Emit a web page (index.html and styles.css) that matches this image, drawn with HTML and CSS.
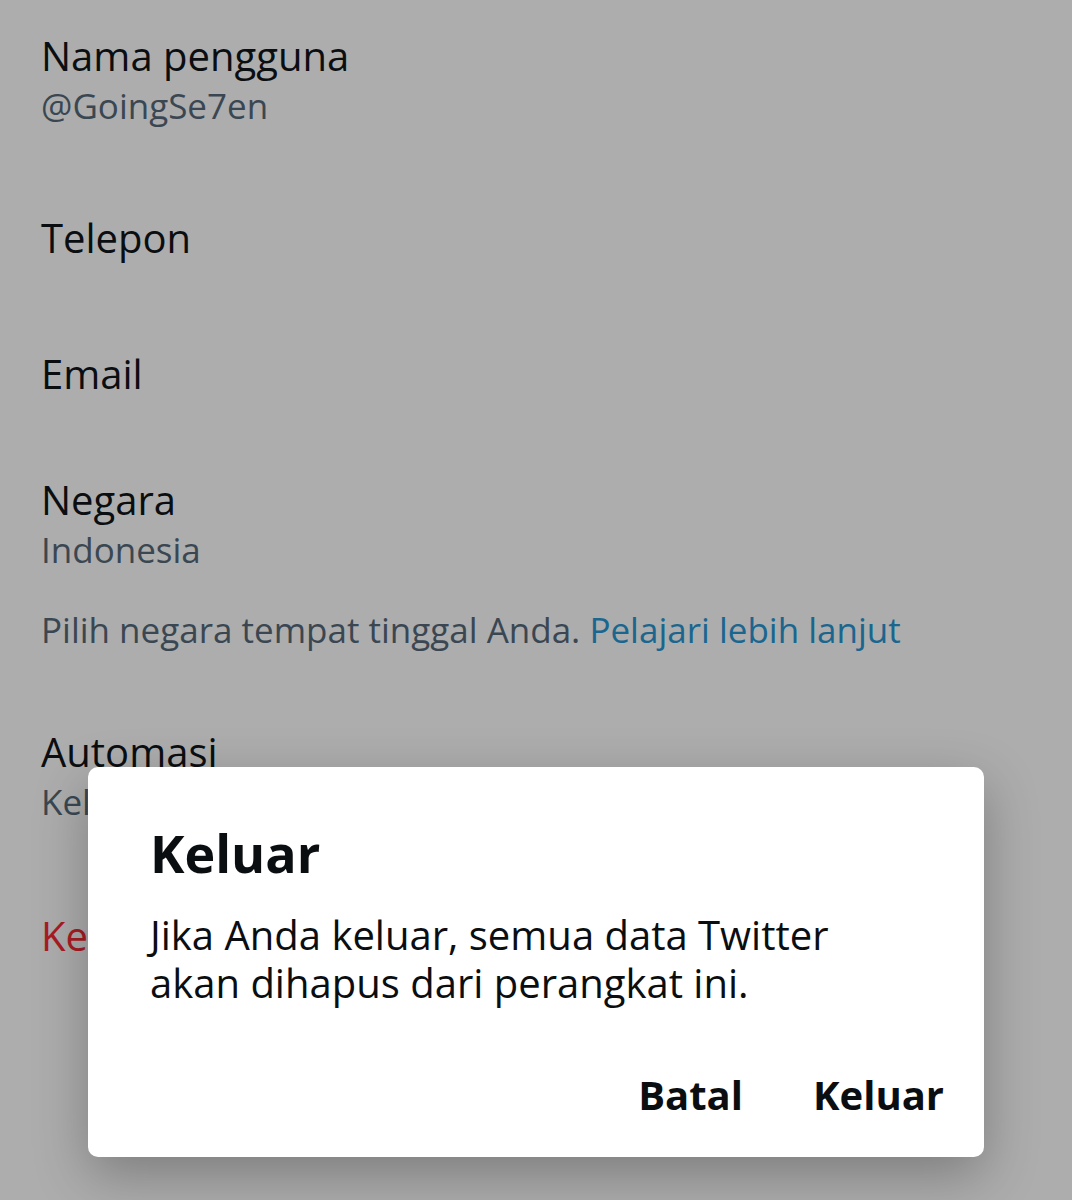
FILE: index.html
```html
<!DOCTYPE html>
<html lang="id">
<head>
<meta charset="UTF-8">
<meta name="viewport" content="width=device-width, initial-scale=1">
<title>Informasi akun</title>
<link rel="stylesheet" href="styles.css">
</head>
<body>
<main class="settings">
  <section class="item item-first">
    <h2>Nama pengguna</h2>
    <p>@GoingSe7en</p>
  </section>
  <section class="item">
    <h2>Telepon</h2>
  </section>
  <section class="item">
    <h2>Email</h2>
  </section>
  <section class="item item-country">
    <h2>Negara</h2>
    <p>Indonesia</p>
  </section>
  <p class="hint">Pilih negara tempat tinggal Anda. <a href="#">Pelajari lebih lanjut</a></p>
  <section class="item item-automation">
    <h2>Automasi</h2>
    <p>Kelola</p>
  </section>
  <button class="logout" type="button">Keluar</button>
</main>

<div class="overlay">
  <div class="dialog" role="dialog" aria-modal="true" aria-labelledby="dialog-title">
    <h1 id="dialog-title">Keluar</h1>
    <p>Jika Anda keluar, semua data Twitter akan dihapus dari perangkat ini.</p>
    <div class="actions">
      <button type="button">Batal</button>
      <button type="button">Keluar</button>
    </div>
  </div>
</div>
</body>
</html>
```
FILE: styles.css
```css
* {
  box-sizing: border-box;
}
body {
  margin: 0;
  min-height: 100vh;
  background-color: #adadad;
  font-family: "Open Sans", "Noto Sans", sans-serif;
  color: #0b0e11;
}
h1, h2, p {
  margin: 0;
}
button {
  border: 0;
  padding: 0;
  background: none;
  font-family: inherit;
  color: inherit;
  cursor: pointer;
}
.settings {
  padding: 28px 41px 0;
}
.item {
  margin-top: 80px;
}
.item h2 {
  font-size: 40px;
  line-height: 56px;
  font-weight: 400;
}
.item p,
.hint {
  font-size: 35px;
  line-height: 44px;
  color: #3a4752;
}
.item p {
  padding-bottom: 2px;
}
.item-first {
  margin-top: 0;
}
.item-country {
  margin-top: 70px;
}
.hint {
  margin-top: 34px;
}
.hint a {
  color: #1a668f;
  text-decoration: none;
}
.item-automation {
  margin-top: 72px;
}
.logout {
  display: block;
  margin-top: 82px;
  font-size: 40px;
  line-height: 56px;
  color: #a81c24;
}
.overlay {
  position: absolute;
  inset: 0;
  display: flex;
  align-items: flex-end;
  padding: 0 88px 43px;
}
.dialog {
  width: 100%;
  padding: 54px 40px 30px 62px;
  border-radius: 10px;
  background-color: #fff;
  box-shadow: 0 18px 54px rgba(0, 0, 0, 0.28);
}
.dialog h1 {
  font-size: 52px;
  line-height: 64px;
  font-weight: 700;
}
.dialog p {
  max-width: 720px;
  margin-top: 26px;
  font-size: 40px;
  line-height: 48px;
}
.actions {
  display: flex;
  justify-content: flex-end;
  gap: 70px;
  margin-top: 56px;
}
.actions button {
  font-size: 40px;
  line-height: 64px;
  font-weight: 700;
}
```
